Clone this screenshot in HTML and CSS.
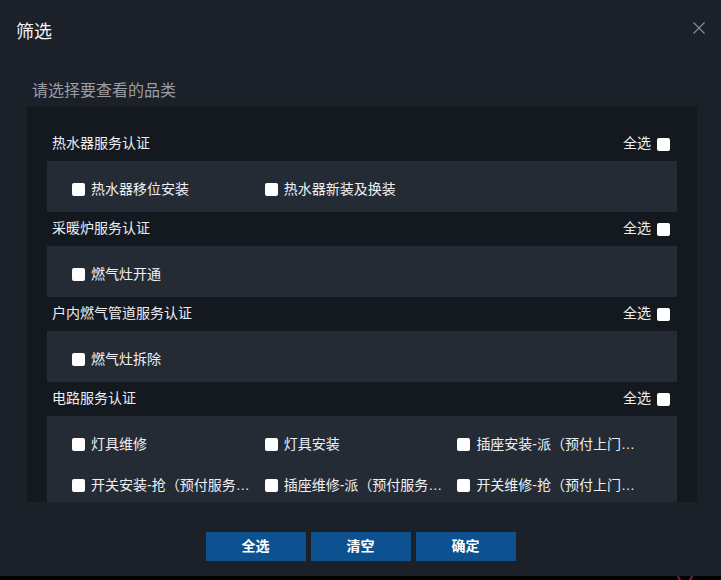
FILE: index.html
```html
<!DOCTYPE html>
<html lang="zh-CN">
<head>
<meta charset="utf-8">
<title>筛选</title>
<link rel="stylesheet" href="styles.css">
</head>
<body>
<div class="backdrop-dot"></div>
<div class="dialog">
  <div class="dialog-header">
    <div class="dialog-title">筛选</div>
    <button class="close" aria-label="关闭">
      <svg width="12" height="12" viewBox="0 0 12 12"><path d="M0.5 0.5 L11.5 11.5 M11.5 0.5 L0.5 11.5" stroke="#868b94" stroke-width="1.2" fill="none"/></svg>
    </button>
  </div>
  <div class="subtitle">请选择要查看的品类</div>
  <div class="panel">
    <div class="section">
      <div class="section-head"><span class="section-name">热水器服务认证</span><label class="all"><span class="all-text">全选</span><span class="box"></span></label></div>
      <div class="items">
        <label class="item"><span class="box"></span><span class="text">热水器移位安装</span></label>
        <label class="item"><span class="box"></span><span class="text">热水器新装及换装</span></label>
      </div>
    </div>
    <div class="section">
      <div class="section-head"><span class="section-name">采暖炉服务认证</span><label class="all"><span class="all-text">全选</span><span class="box"></span></label></div>
      <div class="items">
        <label class="item"><span class="box"></span><span class="text">燃气灶开通</span></label>
      </div>
    </div>
    <div class="section">
      <div class="section-head"><span class="section-name">户内燃气管道服务认证</span><label class="all"><span class="all-text">全选</span><span class="box"></span></label></div>
      <div class="items">
        <label class="item"><span class="box"></span><span class="text">燃气灶拆除</span></label>
      </div>
    </div>
    <div class="section">
      <div class="section-head"><span class="section-name">电路服务认证</span><label class="all"><span class="all-text">全选</span><span class="box"></span></label></div>
      <div class="items">
        <label class="item"><span class="box"></span><span class="text">灯具维修</span></label>
        <label class="item"><span class="box"></span><span class="text">灯具安装</span></label>
        <label class="item"><span class="box"></span><span class="text">插座安装-派（预付上门服务费）</span></label>
        <label class="item"><span class="box"></span><span class="text">开关安装-抢（预付服务费）</span></label>
        <label class="item"><span class="box"></span><span class="text">插座维修-派（预付服务费）</span></label>
        <label class="item"><span class="box"></span><span class="text">开关维修-抢（预付上门服务费）</span></label>
      </div>
    </div>
  </div>
  <div class="footer">
    <button class="btn">全选</button>
    <button class="btn">清空</button>
    <button class="btn">确定</button>
  </div>
</div>
</body>
</html>
```
FILE: styles.css
```css
html, body {
  margin: 0;
  padding: 0;
  background: #000;
  font-family: "Noto Sans CJK SC", "Noto Sans", sans-serif;
}
body {
  position: relative;
  width: 721px;
  height: 580px;
  overflow: hidden;
}
.backdrop-dot {
  position: absolute;
  left: 677px;
  top: 567px;
  width: 12px;
  height: 12px;
  border: 2px solid #7a1650;
  border-radius: 50%;
}
.dialog {
  position: relative;
  width: 721px;
  height: 576px;
  background: #1b2029;
  display: flex;
  flex-direction: column;
}
.dialog-header {
  display: flex;
  justify-content: space-between;
  align-items: flex-start;
  padding: 18px 16px 0 16px;
}
.dialog-title {
  font-size: 18px;
  line-height: 24px;
  color: #f2f3f5;
}
.close {
  margin-top: 4px;
  padding: 0;
  border: 0;
  background: none;
  width: 12px;
  height: 12px;
  display: block;
}
.close svg { display: block; }
.subtitle {
  margin-top: 35px;
  padding-left: 32px;
  font-size: 16px;
  line-height: 24px;
  color: #9a9ea6;
}
.panel {
  margin: 6px 24px 0 27px;
  height: 395px;
  overflow: hidden;
  background: #141920;
  padding: 20px 20px 0;
  box-sizing: border-box;
}
.section-head {
  height: 34px;
  box-sizing: border-box;
  display: flex;
  align-items: center;
  justify-content: space-between;
  padding: 0 7px 0 5px;
  font-size: 14px;
  color: #eceef1;
}
.section-name,
.all-text {
  position: relative;
  top: -2px;
}
.all {
  display: flex;
  align-items: center;
  gap: 6px;
}
.box {
  width: 13px;
  height: 13px;
  background: #fff;
  border-radius: 2px;
  flex: none;
}
.items {
  background: #252b35;
  padding: 8px 0 2px 25px;
  display: grid;
  grid-template-columns: repeat(3, 192.7px);
}
.item {
  height: 41px;
  display: flex;
  align-items: center;
  gap: 6px;
  font-size: 14px;
  color: #eef0f3;
}
.text {
  max-width: 160px;
  white-space: nowrap;
  overflow: hidden;
  text-overflow: ellipsis;
  padding-bottom: 4px;
  font-family: "Liberation Sans", "Noto Sans CJK SC", sans-serif;
}
.footer {
  margin-top: 30px;
  display: flex;
  justify-content: center;
  gap: 5px;
}
.btn {
  width: 100px;
  height: 29px;
  border: 0;
  padding: 0 0 3px;
  background: #0d5190;
  color: #fff;
  font-family: inherit;
  font-size: 14px;
  font-weight: bold;
}
```
